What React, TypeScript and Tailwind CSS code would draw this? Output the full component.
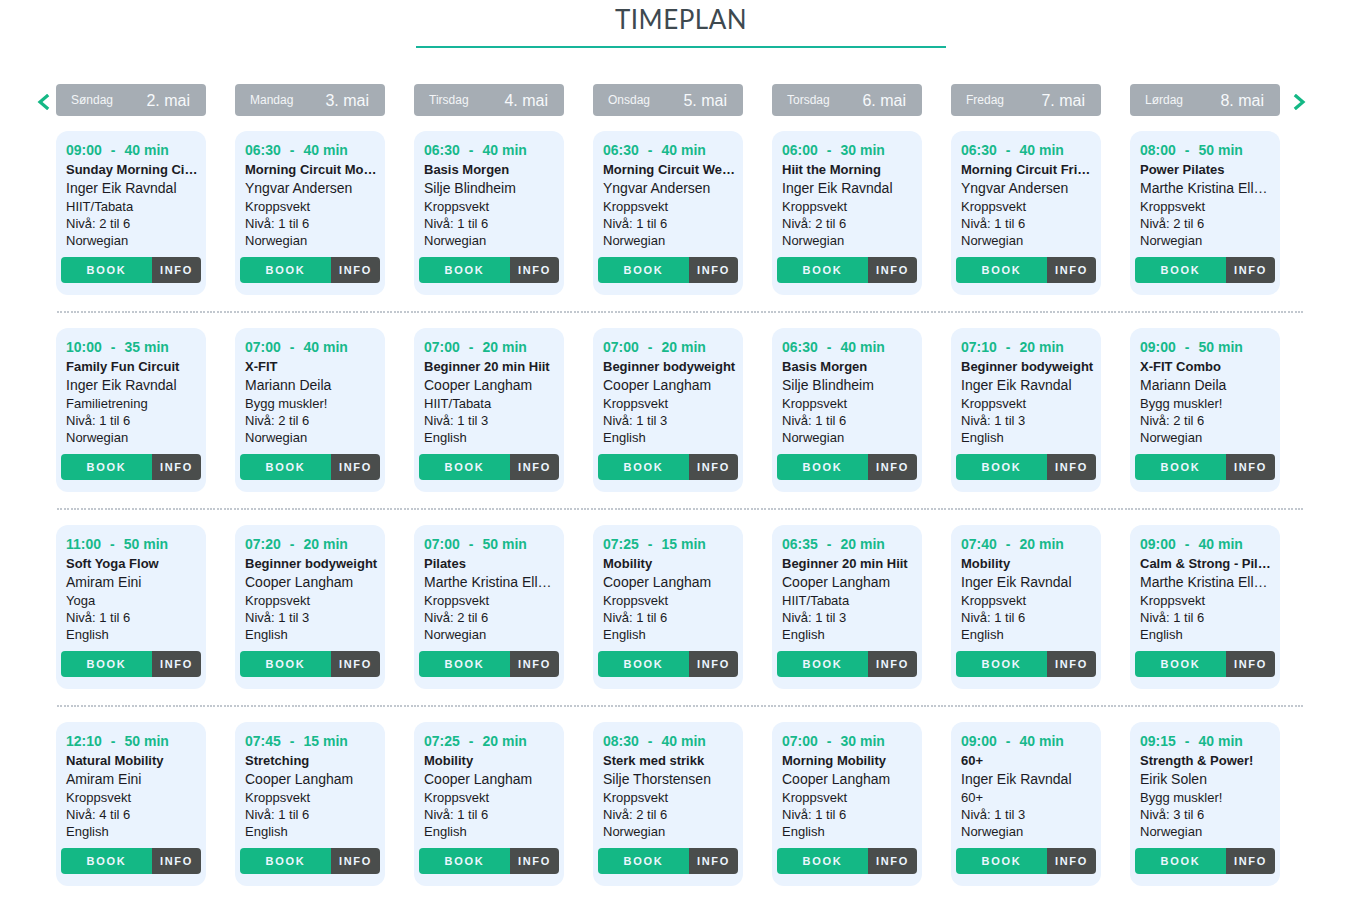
type Session = {
  time: string;
  dur: string;
  title: string;
  coach: string;
  cat: string;
  level: string;
  lang: string;
};

const days = [
  { name: "Søndag", date: "2. mai" },
  { name: "Mandag", date: "3. mai" },
  { name: "Tirsdag", date: "4. mai" },
  { name: "Onsdag", date: "5. mai" },
  { name: "Torsdag", date: "6. mai" },
  { name: "Fredag", date: "7. mai" },
  { name: "Lørdag", date: "8. mai" },
];

const s = (time: string, dur: string, title: string, coach: string, cat: string, level: string, lang: string): Session => ({
  time,
  dur,
  title,
  coach,
  cat,
  level,
  lang,
});

const rows: Session[][] = [
  [
    s("09:00", "40 min", "Sunday Morning Circuit", "Inger Eik Ravndal", "HIIT/Tabata", "2 til 6", "Norwegian"),
    s("06:30", "40 min", "Morning Circuit Monday", "Yngvar Andersen", "Kroppsvekt", "1 til 6", "Norwegian"),
    s("06:30", "40 min", "Basis Morgen", "Silje Blindheim", "Kroppsvekt", "1 til 6", "Norwegian"),
    s("06:30", "40 min", "Morning Circuit Wednesday", "Yngvar Andersen", "Kroppsvekt", "1 til 6", "Norwegian"),
    s("06:00", "30 min", "Hiit the Morning", "Inger Eik Ravndal", "Kroppsvekt", "2 til 6", "Norwegian"),
    s("06:30", "40 min", "Morning Circuit Friday", "Yngvar Andersen", "Kroppsvekt", "1 til 6", "Norwegian"),
    s("08:00", "50 min", "Power Pilates", "Marthe Kristina Ellingsen", "Kroppsvekt", "2 til 6", "Norwegian"),
  ],
  [
    s("10:00", "35 min", "Family Fun Circuit", "Inger Eik Ravndal", "Familietrening", "1 til 6", "Norwegian"),
    s("07:00", "40 min", "X-FIT", "Mariann Deila", "Bygg muskler!", "2 til 6", "Norwegian"),
    s("07:00", "20 min", "Beginner 20 min Hiit", "Cooper Langham", "HIIT/Tabata", "1 til 3", "English"),
    s("07:00", "20 min", "Beginner bodyweight", "Cooper Langham", "Kroppsvekt", "1 til 3", "English"),
    s("06:30", "40 min", "Basis Morgen", "Silje Blindheim", "Kroppsvekt", "1 til 6", "Norwegian"),
    s("07:10", "20 min", "Beginner bodyweight", "Inger Eik Ravndal", "Kroppsvekt", "1 til 3", "English"),
    s("09:00", "50 min", "X-FIT Combo", "Mariann Deila", "Bygg muskler!", "2 til 6", "Norwegian"),
  ],
  [
    s("11:00", "50 min", "Soft Yoga Flow", "Amiram Eini", "Yoga", "1 til 6", "English"),
    s("07:20", "20 min", "Beginner bodyweight", "Cooper Langham", "Kroppsvekt", "1 til 3", "English"),
    s("07:00", "50 min", "Pilates", "Marthe Kristina Ellingsen", "Kroppsvekt", "2 til 6", "Norwegian"),
    s("07:25", "15 min", "Mobility", "Cooper Langham", "Kroppsvekt", "1 til 6", "English"),
    s("06:35", "20 min", "Beginner 20 min Hiit", "Cooper Langham", "HIIT/Tabata", "1 til 3", "English"),
    s("07:40", "20 min", "Mobility", "Inger Eik Ravndal", "Kroppsvekt", "1 til 6", "English"),
    s("09:00", "40 min", "Calm & Strong - Pilates", "Marthe Kristina Ellingsen", "Kroppsvekt", "1 til 6", "English"),
  ],
  [
    s("12:10", "50 min", "Natural Mobility", "Amiram Eini", "Kroppsvekt", "4 til 6", "English"),
    s("07:45", "15 min", "Stretching", "Cooper Langham", "Kroppsvekt", "1 til 6", "English"),
    s("07:25", "20 min", "Mobility", "Cooper Langham", "Kroppsvekt", "1 til 6", "English"),
    s("08:30", "40 min", "Sterk med strikk", "Silje Thorstensen", "Kroppsvekt", "2 til 6", "Norwegian"),
    s("07:00", "30 min", "Morning Mobility", "Cooper Langham", "Kroppsvekt", "1 til 6", "English"),
    s("09:00", "40 min", "60+", "Inger Eik Ravndal", "60+", "1 til 3", "Norwegian"),
    s("09:15", "40 min", "Strength & Power!", "Eirik Solen", "Bygg muskler!", "3 til 6", "Norwegian"),
  ],
];

const Chevron = ({ dir }: { dir: "left" | "right" }) => (
  <svg width="14" height="16" viewBox="0 0 14 16" fill="none">
    <path
      d={dir === "left" ? "M11 2 L4 8 L11 14" : "M3 2 L10 8 L3 14"}
      stroke="#14b885"
      strokeWidth="3.2"
      strokeLinecap="square"
      strokeLinejoin="miter"
    />
  </svg>
);

const Card = ({ item }: { item: Session }) => {
  return (
    <div className="w-[150px] h-[164px] rounded-[12px] bg-[#eaf3fe] pt-[9px] flex flex-col">
      <div className="px-[10px] h-[21px] leading-[20px] text-[14px] font-bold text-[#17b98b] whitespace-nowrap">
        {item.time}
        <span className="px-[9px]">-</span>
        {item.dur}
      </div>
      <div className="pl-[10px] pr-[6px] h-[17px] leading-[17px] text-[13px] font-bold text-[#1b1b24] truncate">{item.title}</div>
      <div className="px-[10px] h-[20px] leading-[20px] text-[14px] text-[#1b1b24] truncate">{item.coach}</div>
      <div className="px-[10px] h-[17px] leading-[17px] text-[13px] text-[#1b1b24] truncate">{item.cat}</div>
      <div className="px-[10px] h-[17px] leading-[17px] text-[13px] text-[#1b1b24]">Nivå: {item.level}</div>
      <div className="px-[10px] h-[17px] leading-[17px] text-[13px] text-[#1b1b24]">{item.lang}</div>
      <div className="mx-[5px] mt-[8px] flex h-[26px] rounded-[4px] overflow-hidden text-[11px] font-bold tracking-[1.7px] text-[#eef6ff]">
        <div className="w-[91px] bg-[#14b885] flex items-center justify-center">BOOK</div>
        <div className="flex-1 bg-[#4a4d4c] flex items-center justify-center">INFO</div>
      </div>
    </div>
  );
};

const Separator = () => (
  <div className="ml-[21px] w-[1248px] mt-[16px] mb-[15px] h-[2px] bg-[repeating-linear-gradient(90deg,#c2c8cf_0px,#c2c8cf_2px,transparent_2px,transparent_3.4px)]" />
);

export default function App() {
  return (
    <div className="w-[1346px] min-h-[901px] bg-white font-['Liberation_Sans',Arial,sans-serif]">
      <div className="flex justify-center pl-[16px] pt-[2px]">
        <div className="w-[530px] flex flex-col items-center">
          <h1 className="font-['Lato',sans-serif] text-[26px] leading-[34px] text-[#3e494f] tracking-[0.5px]">TIMEPLAN</h1>
          <div className="mt-[10px] w-full h-[2px] bg-[#17b59a]" />
        </div>
      </div>

      <div className="pl-[36px] pt-[36px]">
        <div className="flex items-center">
          <div className="w-[20px] flex items-center pt-[3px]">
            <Chevron dir="left" />
          </div>
          <div className="flex gap-[29px]">
            {days.map((d) => (
              <div key={d.name} className="w-[150px] h-[32px] rounded-[4px] bg-[#a6adb4] flex items-center justify-between pl-[15px] pr-[16px]">
                <span className="text-[12px] text-[#f3f5f7]">{d.name}</span>
                <span className="text-[16px] text-[#f7f9fb] pt-[2px]">{d.date}</span>
              </div>
            ))}
          </div>
          <div className="ml-[13px] flex items-center pt-[3px]">
            <Chevron dir="right" />
          </div>
        </div>

        <div className="pt-[15px]">
          {rows.map((row, i) => (
            <div key={i}>
              <div className="pl-[20px] flex gap-[29px]">
                {row.map((item, j) => (
                  <Card key={j} item={item} />
                ))}
              </div>
              {i < rows.length - 1 && <Separator />}
            </div>
          ))}
        </div>
      </div>
    </div>
  );
}
